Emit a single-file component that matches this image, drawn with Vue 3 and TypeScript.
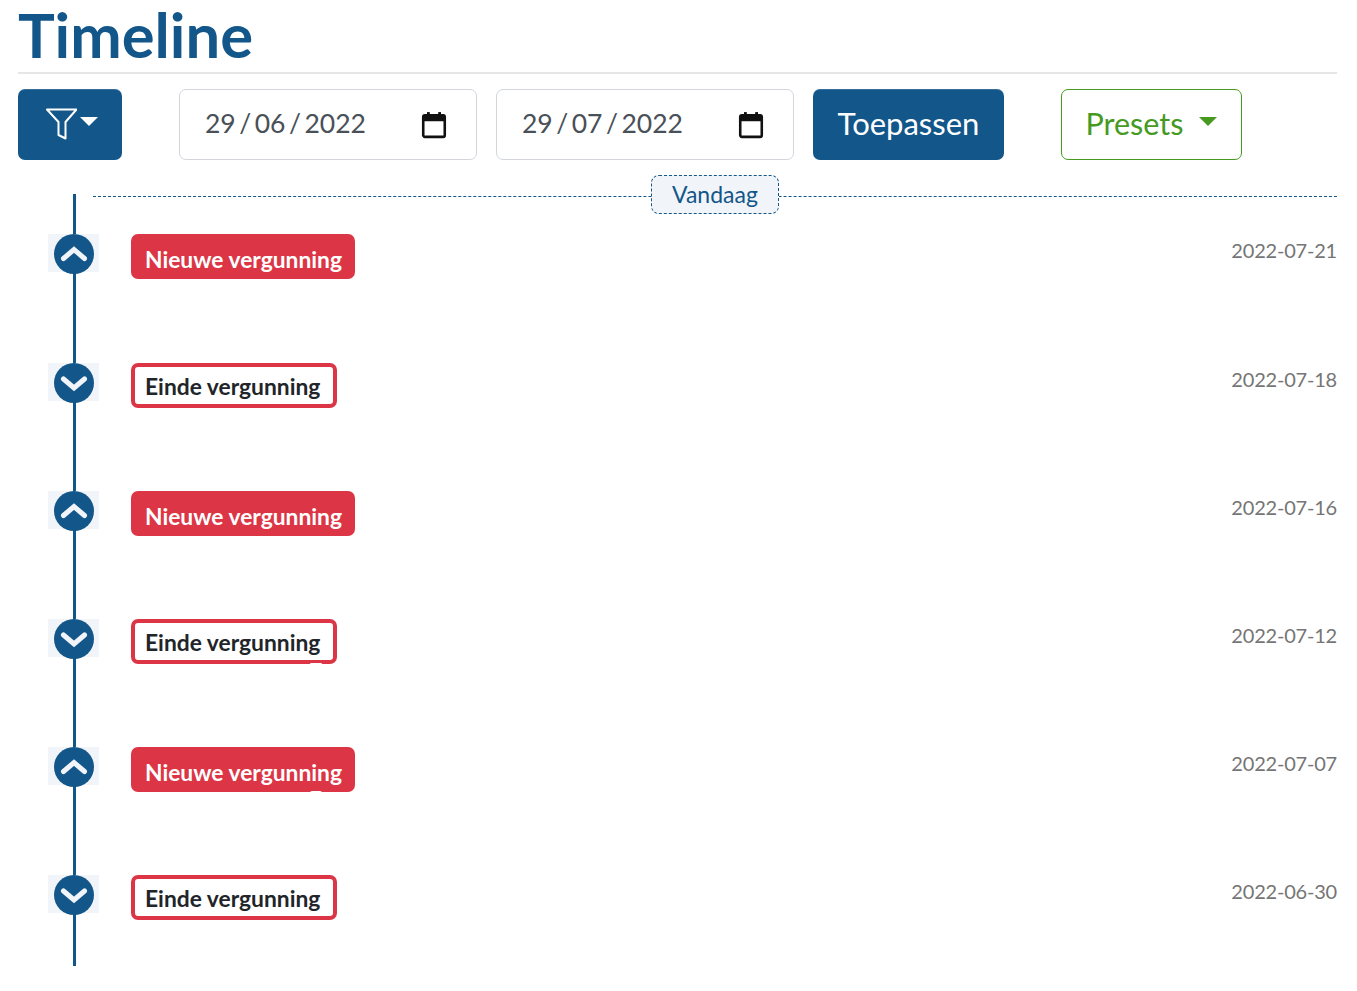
<script setup lang="ts">
interface Row { kind: 'new' | 'end'; date: string }
const rows: Row[] = [
  { kind: 'new', date: '2022-07-21' },
  { kind: 'end', date: '2022-07-18' },
  { kind: 'new', date: '2022-07-16' },
  { kind: 'end', date: '2022-07-12' },
  { kind: 'new', date: '2022-07-07' },
  { kind: 'end', date: '2022-06-30' },
]
const dates = [['29', '06', '2022'], ['29', '07', '2022']]
</script>

<template>
  <main class="page">
    <h1 class="title">Timeline</h1>
    <div class="toolbar">
      <button class="btn filter" aria-label="Filter">
        <svg width="32" height="32" viewBox="0 0 32 32" fill="none" stroke="#fff" stroke-width="2" stroke-linejoin="round">
          <path d="M2 1.500H31.500L20.500 14V30.500L13.500 27V14Z"/>
        </svg>
        <span class="caret white"></span>
      </button>
      <div v-for="(d, i) in dates" :key="i" class="date">
        <span class="date-text">{{ d[0] }}<i>/</i>{{ d[1] }}<i>/</i>{{ d[2] }}</span>
        <svg class="cal" width="26" height="28" viewBox="0 0 24 26" fill="none">
          <rect x="2" y="4" width="20" height="20" rx="1.5" stroke="#111" stroke-width="2.4"/>
          <rect x="2" y="4" width="20" height="5.5" fill="#111"/>
          <rect x="5.500" y="1" width="2.600" height="4" fill="#111"/>
          <rect x="15.900" y="1" width="2.600" height="4" fill="#111"/>
        </svg>
      </div>
      <button class="btn apply">Toepassen</button>
      <button class="presets">Presets<span class="caret green"></span></button>
    </div>

    <section class="timeline">
      <div class="today"><span class="today-label">Vandaag</span></div>
      <div v-for="r in rows" :key="r.date" class="row">
        <div class="marker">
          <span class="dot">
            <svg width="28" height="28" viewBox="0 0 28 28" fill="none" stroke="#f1f5f9" stroke-width="5" stroke-linecap="round" stroke-linejoin="miter">
              <path v-if="r.kind === 'new'" d="M3.500 18.500 14 9.500l10.500 9"/>
              <path v-else d="M3.500 10 14 19l10.500-9"/>
            </svg>
          </span>
        </div>
        <span class="badge" :class="r.kind">{{ r.kind === 'new' ? 'Nieuwe vergunning' : 'Einde vergunning' }}</span>
        <span class="when">{{ r.date }}</span>
      </div>
    </section>
  </main>
</template>

<style scoped>
.page { padding: 0 20px 0 18px; font-family: Lato, "Noto Sans", sans-serif; color: #212529; }
.title { margin: 0; height: 72px; border-bottom: 2px solid #e6e6e6; box-sizing: content-box; font-size: 61.500px; line-height: 68px; font-weight: 700; color: #13568a; }
.toolbar { display: flex; align-items: stretch; margin-top: 15px; height: 71px; }
.btn { border: 0; border-radius: 7px; background: #13568a; color: #fff; font: inherit; box-shadow: inset 0 1px 0 rgba(255,255,255,.15); }
.filter { width: 104px; margin-right: 57px; display: flex; align-items: center; justify-content: center; padding: 0 0 2px 3px; gap: 3px; }
.caret { display: inline-block; width: 0; height: 0; border-left: 9px solid transparent; border-right: 9px solid transparent; border-top: 9px solid; }
.caret.white { border-top-color: #fff; margin-top: -4px; }
.caret.green { border-top-color: #459a1f; margin-left: 16px; position: relative; top: -2px; }
.date { width: 298px; box-sizing: border-box; margin-right: 19px; border: 1px solid #d2d6dc; border-radius: 7px; display: flex; align-items: center; justify-content: space-between; padding: 0 29px 0 25px; }
.date-text { font-size: 26.500px; color: #495057; padding-bottom: 3px; }
.date-text i { font-style: normal; margin: 0 3.500px; }
.apply { width: 191px; margin-right: 57px; font-size: 31px; padding-bottom: 4px; }
.presets { width: 181px; box-sizing: border-box; border: 1px solid #459a1f; border-radius: 7px; background: #fff; color: #459a1f; font: inherit; font-size: 30.500px; display: flex; align-items: center; justify-content: center; padding: 0 0 3px; }
.timeline { position: relative; margin-top: 34px; padding-top: 40.450px; height: 732px; box-sizing: content-box; }
.timeline::before { content: ""; position: absolute; left: 55px; top: 0; bottom: 0; width: 3px; background: #13568a; }
.today { position: absolute; left: 75px; right: 0; top: 2px; border-top: 1px dashed #13568a; }
.today-label { position: absolute; left: 558px; top: -22px; width: 128px; height: 39px; box-sizing: border-box; border: 1px dashed #13568a; border-radius: 8px; background: #f1f5f9; color: #13568a; font-size: 23px; line-height: 36px; text-align: center; }
.row { position: relative; display: flex; align-items: flex-start; height: 128.150px; }
.row:nth-child(5)::after, .row:nth-child(6)::after { content: ""; position: absolute; left: 292px; top: 44px; width: 12px; height: 1.500px; border-radius: 6px 6px 0 0; background: #fff; }
.marker { width: 51px; height: 38px; margin-left: 30px; margin-right: 32px; background: #f1f5f9; display: flex; justify-content: center; }
.dot { width: 40px; height: 40px; flex: none; border-radius: 50%; background: #13568a; display: flex; align-items: center; justify-content: center; }
.badge { height: 45px; box-sizing: border-box; border-radius: 7px; font-size: 22.800px; font-weight: 700; display: flex; align-items: center; padding-top: 5px; white-space: nowrap; }
.badge.new { width: 224px; background: #dc3545; color: #fff; padding-left: 14px; }
.badge.end { width: 206px; background: #fff; border: 4.500px solid #dc3545; color: #212529; padding-left: 10px; padding-top: 1px; }
.when { margin-left: auto; font-size: 20px; letter-spacing: -0.2px; line-height: 33px; color: #757575; }
</style>

<style>
html, body { background: #fff; }
</style>
